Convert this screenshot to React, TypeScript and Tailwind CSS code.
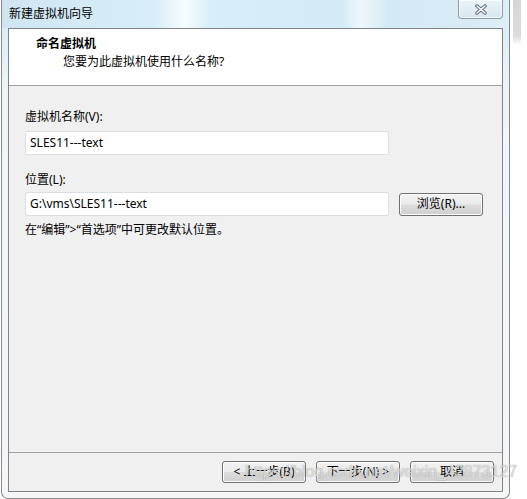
import React from "react";

const font = "font-['Noto_Sans','Noto_Sans_CJK_SC',sans-serif]";

const WinButton = ({ children, className = "" }: { children: React.ReactNode; className?: string }) => (
  <div
    className={`flex items-center justify-center h-[22px] w-[84px] rounded-[3px] border border-[#707070] bg-[linear-gradient(180deg,#f2f2f2_0%,#ebebeb_48%,#dddddd_52%,#cfcfcf_100%)] shadow-[inset_0_0_0_1px_#fcfcfc] text-[12px] leading-none text-black ${className}`}
  >
    {children}
  </div>
);

const CloseGlyph = () => (
  <svg width="14" height="11" viewBox="0 0 14 11">
    <path d="M3 2 L11 9 M11 2 L3 9" stroke="#6b7682" strokeWidth="3.6" strokeLinecap="round" fill="none" />
    <path d="M3 2 L11 9 M11 2 L3 9" stroke="#ffffff" strokeWidth="1.4" strokeLinecap="round" fill="none" />
  </svg>
);

export default function App() {
  return (
    <div className={`relative flex w-[527px] h-[499px] bg-white overflow-hidden ${font}`}>
      {/* window */}
      <div className="ml-[1px] flex flex-col w-[509px] h-[499px] rounded-b-[7px] border border-t-0 border-[#8a8a8a] bg-[linear-gradient(180deg,#d4ecf8_0px,#d9eef8_28px,#eef5f9_90px,#f4f6f8_100%)] px-[6px] pb-[6px]">
        {/* title bar */}
        <div className="flex justify-between h-[28px] -mx-[6px] px-[6px] bg-[linear-gradient(90deg,#cfe5f1_0%,#d7edf8_30%,#f6fcfe_36%,#d7eef9_41%,#d3ebf7_67%,#eff8fb_71%,#d3eaf5_76%,#dcedf5_100%)]">
          <div className="pl-[1px] pt-[6px] text-[12px] leading-[16px] text-black">新建虚拟机向导</div>
          <div className="flex items-center justify-center w-[45px] h-[19px] rounded-b-[4px] border border-t-0 border-[#8d9aa8] bg-[linear-gradient(180deg,#eaf4fa_0%,#e1edf5_50%,#d6e5ef_100%)] shadow-[inset_0_0_0_1px_rgba(255,255,255,0.7)]">
            <CloseGlyph />
          </div>
        </div>

        {/* inner panel */}
        <div className="flex flex-col flex-1 border border-[#838383] bg-[#f0f0f0]">
          {/* header */}
          <div className="h-[57px] bg-white border-b border-[#a0a0a0] pl-[27px] pt-[7px]">
            <div className="text-[12px] leading-[16px] font-bold text-black">命名虚拟机</div>
            <div className="pl-[27px] pt-[2px] text-[12px] leading-[16px] text-black">您要为此虚拟机使用什么名称?</div>
          </div>

          {/* body */}
          <div className="flex flex-col flex-1 pl-[16px] pt-[23px]">
            <div className="text-[12px] leading-[16px] text-black">虚拟机名称(V):</div>
            <div className="mt-[6px] flex items-center w-[364px] h-[24px] bg-white border border-[#dadfe4] rounded-[2px] pl-[4px] text-[12px] text-black">
              SLES11---text
            </div>

            <div className="mt-[17px] text-[12px] leading-[16px] text-black">位置(L):</div>
            <div className="mt-[4px] flex items-center gap-[10px]">
              <div className="flex items-center w-[364px] h-[24px] bg-white border border-[#dadfe4] rounded-[2px] pl-[4px] text-[12px] text-black">
                G:\vms\SLES11---text
              </div>
              <WinButton className="h-[23px]">浏览(R)...</WinButton>
            </div>
            <div className="mt-[6px] text-[12px] leading-[16px] text-black">在“编辑”&gt;“首选项”中可更改默认位置。</div>
          </div>

          {/* footer */}
          <div className="border-t border-[#a0a0a0] h-[39px] flex items-start justify-end gap-[10px] pt-[8px] pr-[8px]">
            <WinButton>&lt; 上一步(B)</WinButton>
            <WinButton>下一步(N) &gt;</WinButton>
            <WinButton>取消</WinButton>
          </div>
        </div>
      </div>

      {/* window shadow at right */}
      <div className="ml-[3px] w-[8px] h-[45px] bg-[linear-gradient(180deg,#d6d6d6_0%,#dcdcdc_80%,#ffffff_100%)]" />

      {/* watermark */}
      <div className="absolute left-[245px] top-[463px] text-[16px] leading-[18px] font-['Liberation_Sans',sans-serif] text-[rgba(255,255,255,0.7)] [text-shadow:0_0_1px_rgba(80,80,80,0.7)]">
        https://blog.csdn.net/weixin_42873127
      </div>
    </div>
  );
}
